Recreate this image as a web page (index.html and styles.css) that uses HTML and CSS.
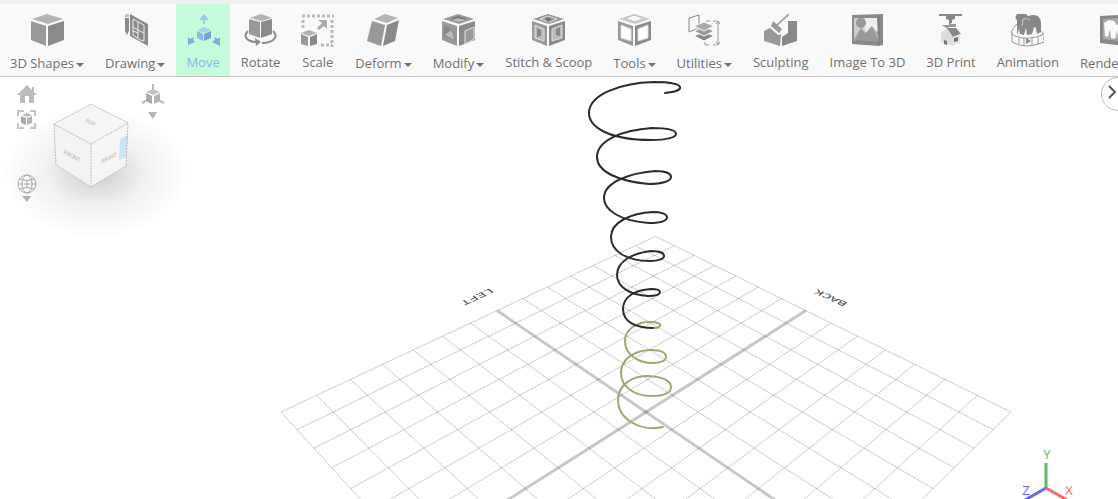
FILE: index.html
```
<!DOCTYPE html>
<html lang="en">

<head>
    <meta charset="UTF-8">
    <meta name="viewport" content="width=device-width, initial-scale=1.0">
    <title>3D Editor</title>
    <link rel="stylesheet" href="styles.css">
</head>

<body>
    <div class="app">
        <div class="top-strip"></div>
        <nav class="toolbar">
            <button type="button" class="tool">
                <svg class="tool-icon" viewBox="0 0 33 33">
                    <path fill="#b3b3b3" d="M16 0 32 5 17 10 1 5z" />
                    <path fill="#999" d="M0 7 15 12V32L0 26z" />
                    <path fill="#8a8a8a" d="M17 12 33 7V26L17 32z" />
                </svg>
                <span class="tool-label has-menu">3D Shapes</span>
            </button>
            <button type="button" class="tool">
                <svg class="tool-icon" viewBox="0 0 33 33">
                    <path fill="#8a8a8a" d="M6 4h4v13l-2 4-2-4z" />
                    <path fill="#bbb" d="M6 1q2-2 4 0v2H6z" />
                    <path fill="#8a8a8a" d="M11 0 29 10V32L11 22z" />
                    <path fill="none" stroke="#eee" d="M14 5 25 11V27L21 26 14 21zM14 13l5 3V8M19 16l6 3M19 16v3l-5-2M19 19v5" />
                </svg>
                <span class="tool-label has-menu">Drawing</span>
            </button>
            <button type="button" class="tool active">
                <svg class="tool-icon" viewBox="0 0 33 33">
                    <path fill="#9ccbed" d="M17 0l5 6h-4v4h-2V6h-4z" />
                    <path fill="#a4d4ef" d="M17 13l7 3-7 3-7-3z" />
                    <path fill="#86b9e0" d="M10 17l6 3v7l-6-3z" />
                    <path fill="#70a7d3" d="M17 20l7-3v7l-7 3z" />
                    <path fill="#77addf" d="M1 23l2 2 4-2-1 3 2 2-7 3zM33 23l-2 2-4-2 1 3-3 2 8 4z" />
                </svg>
                <span class="tool-label">Move</span>
            </button>
            <button type="button" class="tool">
                <svg class="tool-icon" viewBox="0 0 33 33">
                    <path fill="#b3b3b3" d="M17 0 28 4 17 7 6 4z" />
                    <path fill="#999" d="M5 5 16 8V24L5 20z" />
                    <path fill="#8a8a8a" d="M17 8 28 5V20L17 24z" />
                    <path fill="none" stroke="#8a8a8a" stroke-width="2" d="M4 17C-2 23 4 28 13 28M18 29C30 29 35 22 29 17" />
                    <path fill="#8a8a8a" d="M11 24l6 4-5 4z" />
                </svg>
                <span class="tool-label">Rotate</span>
            </button>
            <button type="button" class="tool">
                <svg class="tool-icon" viewBox="0 0 33 33">
                    <path fill="none" stroke="#bbb" stroke-width="3" stroke-dasharray="3 2" d="M1 2h32M2 6v9M31 6v27M20 31h11" />
                    <path fill="#aaa" d="M17 6h9v9l-3-3-5 4-2-2 5-5z" />
                    <path fill="#b3b3b3" d="M8 16l8 3-8 3-8-3z" />
                    <path fill="#999" d="M0 20l7 3v9l-7-2z" />
                    <path fill="#8a8a8a" d="M9 23l7-3v10l-7 2z" />
                </svg>
                <span class="tool-label">Scale</span>
            </button>
            <button type="button" class="tool">
                <svg class="tool-icon" viewBox="0 0 33 33">
                    <path fill="#b3b3b3" d="M18 0 31 4 20 9 7 5z" />
                    <path fill="#999" d="M5 7 18 11 14 32 0 27z" />
                    <path fill="#8a8a8a" d="M20 11 32 6 28 27 16 32z" />
                </svg>
                <span class="tool-label has-menu">Deform</span>
            </button>
            <button type="button" class="tool">
                <svg class="tool-icon" viewBox="0 0 33 33">
                    <path fill="#999" d="M16 0 32 5 17 10 1 5z" />
                    <path fill="#777" d="M16 2l9 3-8 3-9-3z" />
                    <path fill="#bbb" d="M16 4l8 2-7 2-7-2z" />
                    <path fill="#999" d="M0 7 15 12V32L0 26z" />
                    <path fill="#888" d="M2 11q11 3 11 16L2 22z" />
                    <path fill="#bbb" d="M3 21l6-5q3 5 3 10z" />
                    <path fill="#8a8a8a" d="M17 12 33 7V26L17 32z" />
                    <path fill="#999" stroke="#e5e5e5" d="M23 30V17l9-4v12l-5 3z" />
                </svg>
                <span class="tool-label has-menu">Modify</span>
            </button>
            <button type="button" class="tool">
                <svg class="tool-icon" viewBox="0 0 33 33">
                    <path fill="#999" d="M16 0 32 5 17 10 1 5z" />
                    <path fill="#999" stroke="#ddd" d="M16 2l9 3-8 3-9-3z" />
                    <path fill="#777" d="M16 3l4 3-4 2-3-3z" />
                    <path fill="#999" d="M0 7 15 12V32L0 26z" />
                    <path fill="#8a8a8a" d="M17 12 33 7V26L17 32z" />
                    <path fill="#bbb" stroke="#ddd" d="M3 11l9 4v12l-9-3zM20 15l10-4v13l-10 3z" />
                    <path fill="#888" d="M5 14l4 2v6l-4 1zM24 15l4-2v9l-4-1z" />
                </svg>
                <span class="tool-label">Stitch &amp; Scoop</span>
            </button>
            <button type="button" class="tool">
                <svg class="tool-icon" viewBox="0 0 33 33">
                    <path fill="#ccc" d="M16 0 32 5 17 10 1 5z" />
                    <path fill="#f8f8f8" stroke="#bbb" d="M16 1l9 3v1l-8 3-9-3V4z" />
                    <path fill="#999" d="M0 7 15 12V32L0 26z" />
                    <path fill="#8a8a8a" d="M17 12 33 7V26L17 32z" />
                    <path fill="#fff" stroke="#ddd" d="M3 11l10 4v12L3 24zM20 15l10-4v13l-10 3z" />
                </svg>
                <span class="tool-label has-menu">Tools</span>
            </button>
            <button type="button" class="tool">
                <svg class="tool-icon" viewBox="0 0 33 33">
                    <path fill="none" stroke="#888" d="M1 4 11 1V14L1 18z" />
                    <path fill="#888" stroke="#f9f9f9" d="M6 22l10-4 10 4-10 5z" />
                    <path fill="#999" stroke="#f9f9f9" d="M6 17l10-4 10 4-10 5z" />
                    <path fill="#aaa" stroke="#f9f9f9" d="M6 12l10-4 10 4-10 5z" />
                    <path fill="none" stroke="#999" d="M18 7h4M25 7h4M17 28v3h4M25 31h3M30 7v24M28 10l2-3 2 3M28 28l2 3 2-3" />
                </svg>
                <span class="tool-label has-menu">Utilities</span>
            </button>
            <button type="button" class="tool">
                <svg class="tool-icon" viewBox="0 0 33 33">
                    <path fill="none" stroke="#aaa" stroke-width="2" d="M25 0 12 12" />
                    <path fill="#999" d="M9 7 18 15 15 19 7 12z" />
                    <path fill="#999" d="M0 17l6-3 8 7 3-1-1 12L0 27z" />
                    <path fill="#8a8a8a" d="M24 7h9v20l-15 5V23l6-4z" />
                </svg>
                <span class="tool-label">Sculpting</span>
            </button>
            <button type="button" class="tool">
                <svg class="tool-icon" viewBox="0 0 33 33">
                    <path fill="#8a8a8a" d="M1 1 32 0V31L28 32 1 30z" />
                    <path fill="#ccc" d="M3 4h23l1 14-7-4-8 8-9 5z" />
                    <path fill="#eee" d="M14 4h12v14l-6-6-5 6-2-5z" />
                    <path fill="#999" d="M3 26 10 14l5 6 6-8 7 10v6z" />
                    <path fill="#bbb" d="M21 12l6 9v4z" />
                    <circle cx="10" cy="9" r="5" fill="#999" />
                    <path fill="none" stroke="#777" d="M28 2v29" />
                </svg>
                <span class="tool-label">Image To 3D</span>
            </button>
            <button type="button" class="tool">
                <svg class="tool-icon" viewBox="0 0 33 33">
                    <path fill="#888" d="M5 0h23v2H5zM12 2h9v3l-3 1v3h-3V6l-3-1z" />
                    <path fill="none" stroke="#999" stroke-width="2" d="M16 9v2h6M22 12H11l3 2" />
                    <path fill="#ddd" d="M7 19l6-5 6 7v11l-12-4z" />
                    <path fill="#888" d="M13 14h9l5 6-8 3z" />
                    <path fill="#e5e5e5" d="M19 23l7-3v9l-7 3z" />
                    <path fill="#777" d="M20 24l4-1v4l-4 1zM10 26l3 1v4l-3-1z" />
                </svg>
                <span class="tool-label">3D Print</span>
            </button>
            <button type="button" class="tool">
                <svg class="tool-icon" viewBox="0 0 33 33">
                    <path fill="none" stroke="#999" d="M6 10Q-4 20 4 22Q17 27 31 21Q34 19 28 16M1 18v10q14 8 32 0V18M8 24v6M13 24v7M21 24v7M27 23v7" />
                    <path fill="#888" d="M6 19V6q-3-2 0-6h9l2 2q12-4 13 7v9l-4 2-1-6-2-1-2 7-5 1-1-7-2 7-4-1-1-6-1 6z" />
                    <path fill="none" stroke="#ccc" d="M11 12l1-7q5-1 7 1" />
                    <path fill="#888" d="M15 24l5 3-5 3z" />
                </svg>
                <span class="tool-label">Animation</span>
            </button>
            <button type="button" class="tool">
                <svg class="tool-icon" viewBox="0 0 33 33">
                    <path fill="#888" d="M0 2 33 0V33L0 29z" />
                    <path fill="#aaa" d="M3 5 30 3V28L3 25z" />
                    <path fill="#fafafa" d="M4 9l5-3 5 1 3 4 8-2 3 4v14l-3-1-1-9-2 9-4-1-1-8-2 8-4-1-1-9-2 8-3-1z" />
                </svg>
                <span class="tool-label has-menu">Rendering</span>
            </button>
        </nav>

        <main class="viewport">
            <svg class="scene" viewBox="0 0 1118 422" preserveAspectRatio="xMidYMin slice">
                <g id="grid"></g>
                <text class="floor-label" transform="matrix(-0.9 0.42 -0.5 -0.4 490 211)">LEFT</text>
                <text class="floor-label" transform="matrix(-0.9 -0.42 0.5 -0.4 848 226)">BACK</text>
                <path class="coil coil-lower" d="M663 350C640 355 618 342 618 323C618 309 630 300 645 299C661 299 671 303 671 310C671 316 664 319 651 319C635 319 621 310 621 296C621 281 636 273 651 273C661 273 666 276 666 280C666 284 660 286 650 286C637 285 625 277 625 264C625 252 637 245 650 245C658 245 661 247 660 249C659 251 656 251 653 251" />
                <path class="coil coil-upper" d="M665 16C675 15 681 13 680 10C679 7 669 5 654 5C619 6 589 18 589 36C589 50 609 63 651 63C668 63 676 60 676 57C676 53 667 51 652 51C623 53 597 63 597 80C597 95 618 104 649 107C662 107 671 104 671 100C671 96 664 94 655 94C630 96 604 105 604 121C604 133 620 144 649 146C660 146 667 144 667 140C667 137 661 135 653 135C631 136 611 145 611 160C611 174 626 184 650 184C658 184 664 182 664 179C664 176 659 174 651 174C633 176 617 184 617 198C617 210 630 218 648 219C656 219 660 218 660 215C660 213 657 212 651 212C636 213 623 219 623 232C623 245 636 251 653 251" />
            </svg>

            <div class="view-controls">
                <div class="view-buttons">
                    <button type="button" class="view-button" aria-label="Home">
                        <svg width="20" height="19" viewBox="0 0 20 19">
                            <path fill="#bbb" d="M10 0l5 5V2h2v5l3 3h-3v8h-5v-7H8v7H3v-8H0z" />
                        </svg>
                    </button>
                    <button type="button" class="view-button" aria-label="Fit view">
                        <svg width="20" height="19" viewBox="0 0 20 19">
                            <path fill="none" stroke="#c4c4c4" stroke-width="2" d="M1 6V1h6M13 1h5v5M18 13v5h-5M7 18H1v-5" />
                            <path fill="#bbb" d="M10 3l5 2-5 2-5-2z" />
                            <path fill="#aaa" d="M4 6l5 2v7l-5-2z" />
                            <path fill="#b5b5b5" d="M10 8l5-2v7l-5 2z" />
                        </svg>
                    </button>
                    <button type="button" class="view-button orbit" aria-label="Orbit">
                        <svg width="20" height="28" viewBox="0 0 20 28">
                            <g fill="none" stroke="#b0b0b0">
                                <circle cx="10" cy="10" r="9" />
                                <ellipse cx="10" cy="10" rx="5" ry="9" />
                                <path d="M2 5q8 3 16 0M2 15q8-3 16 0M1 10h5M14 10h5M10 7v6M7 10h6" />
                            </g>
                            <path fill="#b5b5b5" d="M5 22h9l-4 6z" />
                        </svg>
                    </button>
                </div>
                <svg class="view-cube" viewBox="0 0 140 156">
                    <defs>
                        <radialGradient id="shade">
                            <stop offset="0" stop-color="#000" stop-opacity="0.2" />
                            <stop offset="0.5" stop-color="#000" stop-opacity="0.06" />
                            <stop offset="1" stop-color="#000" stop-opacity="0" />
                        </radialGradient>
                    </defs>
                    <ellipse cx="58" cy="92" rx="95" ry="66" fill="url(#shade)" />
                    <path fill="#f5f5f5" d="M53 23 90 42 53 63 16 43z" />
                    <path fill="#f3f3f3" d="M16 43 53 63V106L18 84z" />
                    <path fill="#f5f5f5" d="M53 63 90 42 88 85 53 106z" />
                    <path fill="#c9e4f5" d="M82 58 90 54 88 76 81 79z" />
                    <path class="cube-edges" d="M53 23 90 42 53 63 16 43zM53 63V106L18 84 16 43M53 106 88 85 90 42" />
                    <text class="cube-label" transform="matrix(0.8 0.35 -0.6 0.7 51 43)">TOP</text>
                    <text class="cube-label" transform="matrix(0.8 0.4 0 1 34 77)">FRONT</text>
                    <text class="cube-label" transform="matrix(0.8 -0.4 0 1 71 79)">RIGHT</text>
                </svg>
                <button type="button" class="view-button" aria-label="View axes">
                    <svg width="24" height="36" viewBox="0 0 24 36">
                        <path fill="none" stroke="#bbb" stroke-width="2" d="M12 0v6M1 19l6-3M17 16l6 3" />
                        <path fill="#c4c4c4" d="M12 5l7 3-7 3-7-3z" />
                        <path fill="#aaa" d="M5 9l6 3v8l-6-3z" />
                        <path fill="#b5b5b5" d="M13 12l6-3v8l-6 3z" />
                        <path fill="#b5b5b5" d="M7 28h9l-4 7z" />
                    </svg>
                </button>
            </div>

            <button type="button" class="panel-toggle" aria-label="Open panel">
                <svg width="10" height="14" viewBox="0 0 10 14">
                    <path fill="none" stroke="#555" stroke-width="2" d="M1 1l6 6-6 6" />
                </svg>
            </button>

            <svg class="axes" width="60" height="56" viewBox="0 0 60 56">
                <path stroke="#66b266" d="M28 45V20" />
                <path stroke="#6666ff" d="M28 45 7 57" />
                <path stroke="#ff6666" d="M28 45 49 57" />
                <text x="29" y="16" fill="#66b266">Y</text>
                <text x="8" y="52" fill="#6666ff">Z</text>
                <text x="51" y="52" fill="#ff6666">X</text>
            </svg>
        </main>
    </div>

    <script>
        var CELLS = 14;

        // a and b run from -1 to 1 across the floor
        function project(a, b) {
            var side = (a - b) / 2;
            var depth = (a + b) / 2;
            var w = 1 + 0.366 * depth;
            var x = 646 + (365 * side + 13 * depth) / w;
            var y = 335 - 240 * depth / w;
            return x.toFixed(1) + ' ' + y.toFixed(1);
        }

        var grid = document.getElementById('grid');

        function addPath(className, d) {
            var path = document.createElementNS('http://www.w3.org/2000/svg', 'path');
            path.setAttribute('class', className);
            path.setAttribute('d', d);
            grid.appendChild(path);
        }

        for (var i = 0; i <= CELLS; i++) {
            var p = i / CELLS * 2 - 1;
            var className = i === CELLS / 2 ? 'grid-axis' : 'grid-line';
            addPath(className, 'M' + project(p, -1) + 'L' + project(p, 1));
            addPath(className, 'M' + project(-1, p) + 'L' + project(1, p));
        }
    </script>
</body>

</html>
```
FILE: styles.css
```
body {
    font-family: "Open Sans", "Noto Sans", sans-serif;
    background-color: #fff;
    margin: 0;
    overflow: hidden;
}

button {
    background: none;
    border: none;
    cursor: pointer;
    font-family: inherit;
    padding: 0;
}

.app {
    display: flex;
    flex-direction: column;
    height: 100vh;
}

.top-strip {
    background-color: #f0f0f0;
    flex: none;
    height: 4px;
}

.toolbar {
    background-color: #f9f9f9;
    border-bottom: 1px solid #c8c8c8;
    display: flex;
    flex: none;
    gap: 1px;
    overflow: hidden;
}

.tool {
    align-items: center;
    color: #707070;
    display: flex;
    flex: none;
    flex-direction: column;
    font-size: 13px;
    gap: 6px;
    justify-content: flex-start;
    line-height: 18px;
    padding: 10px 10px 4px;
}

.tool.active {
    background-color: #c6fbdc;
    color: #85b9e5;
}

.tool-icon {
    height: 33px;
    width: 33px;
}

.tool-label {
    white-space: nowrap;
}

.has-menu {
    padding-top: 1px;
}

.has-menu::after {
    border: 4px solid transparent;
    border-bottom: 0;
    border-top-color: #707070;
    content: "";
    display: inline-block;
    margin-left: 2px;
    vertical-align: 1px;
}

.viewport {
    flex: 1;
    min-height: 0;
    overflow: hidden;
    position: relative;
}

.scene {
    display: block;
    height: 100%;
    width: 100%;
}

.grid-line {
    fill: none;
    stroke: rgba(0, 0, 0, 0.2);
    stroke-width: 1;
}

.grid-axis {
    fill: none;
    stroke: rgba(0, 0, 0, 0.22);
    stroke-width: 3;
}

.coil {
    fill: none;
    stroke-linecap: round;
    stroke-width: 2;
}

.coil-upper {
    stroke: #2b2b2b;
}

.coil-lower {
    stroke: #a5a573;
}

.floor-label {
    fill: #444;
    font-family: "Liberation Mono", monospace;
    font-size: 14px;
}

.view-controls {
    align-items: flex-start;
    display: flex;
    left: 17px;
    position: absolute;
    top: 7px;
}

.view-buttons {
    display: flex;
    flex-direction: column;
    gap: 6px;
    padding-top: 1px;
}

.view-button svg {
    display: block;
}

.orbit {
    margin-top: 39px;
}

.view-cube {
    height: 156px;
    margin: -3px -37px 0 1px;
    overflow: visible;
    width: 140px;
}

.cube-edges {
    fill: none;
    stroke: #bbb;
    stroke-dasharray: 2 1;
}

.cube-label {
    fill: #aaa;
    font-family: "Liberation Sans", Arial, sans-serif;
    font-size: 6px;
    text-anchor: middle;
}

.panel-toggle {
    background-color: #fff;
    border: 1px solid #bbb;
    border-radius: 50%;
    height: 34px;
    padding-left: 6px;
    position: absolute;
    right: -17px;
    text-align: left;
    top: 0;
    width: 34px;
}

.axes {
    bottom: 0;
    font-family: "Open Sans", sans-serif;
    font-size: 13px;
    position: absolute;
    right: 40px;
    stroke-width: 3;
}

.axes text {
    stroke: none;
    text-anchor: middle;
}
```
